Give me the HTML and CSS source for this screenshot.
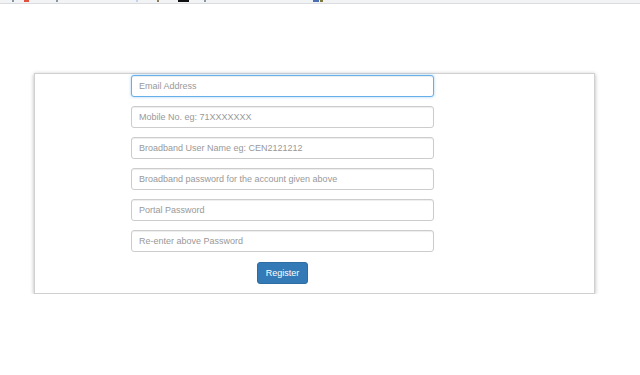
FILE: index.html
```html
<!DOCTYPE html>
<html>
<head>
<meta charset="utf-8">
<link rel="stylesheet" href="styles.css">
</head>
<body>
<div class="topstrip">
  <span class="speck s1"></span><span class="speck s2"></span><span class="speck s3"></span>
  <span class="speck s4"></span><span class="speck s5"></span><span class="speck s6"></span>
  <span class="speck s7"></span><span class="speck s8"></span><span class="speck s9"></span>
</div>
<div class="topline"></div>
<main class="card">
  <form class="form">
    <input class="field focused" type="text" placeholder="Email Address">
    <input class="field" type="text" placeholder="Mobile No. eg: 71XXXXXXX">
    <input class="field" type="text" placeholder="Broadband User Name eg: CEN2121212">
    <input class="field" type="text" placeholder="Broadband password for the account given above">
    <input class="field" type="text" placeholder="Portal Password">
    <input class="field" type="text" placeholder="Re-enter above Password">
    <div class="actions"><button class="btn" type="button">Register</button></div>
  </form>
</main>
</body>
</html>
```
FILE: styles.css
```css
html, body { margin: 0; padding: 0; background: #fff; }
body { font-family: "Liberation Sans", Arial, sans-serif; }
.topstrip { height: 3px; background: #f1f3f4; position: relative; }
.topline { height: 1px; background: #dadce0; }
.speck { position: absolute; top: 0; height: 2px; width: 2px; background: #8a94a6; }
.s1 { left: 12px; }
.s2 { left: 24px; width: 5px; background: #e0523c; }
.s3 { left: 56px; }
.s4 { left: 136px; background: #c5d3ee; }
.s5 { left: 157px; background: #8a7a5a; }
.s6 { left: 178px; width: 11px; height: 2px; background: #111; }
.s7 { left: 204px; }
.s8 { left: 313px; width: 6px; background: #4a6fb0; }
.s9 { left: 320px; width: 3px; background: #7d7a3a; }
.card {
  margin: 69px 0 0 34px;
  width: 561px;
  border: 1px solid #d0d0d0;
  box-shadow: 0 1px 4px rgba(0,0,0,0.3);
  background: #fff;
  padding: 1px 0 9px 96px;
  box-sizing: border-box;
}
.form { width: 303px; display: flex; flex-direction: column; gap: 9px; }
.field {
  display: block;
  height: 22px;
  box-sizing: border-box;
  width: 100%;
  border: 1px solid #ccc;
  border-radius: 3px;
  padding: 0 7px;
  font: 9px "Liberation Sans", Arial, sans-serif;
  color: #555;
  box-shadow: inset 0 1px 1px rgba(0,0,0,0.075);
  outline: none;
}
.field::placeholder { color: #999; }
.focused {
  border-color: #66afe9;
  box-shadow: inset 0 1px 1px rgba(0,0,0,0.075), 0 0 3px rgba(102,175,233,0.6);
}
.actions { display: flex; justify-content: center; margin-top: 1px; }
.btn {
  height: 22px;
  width: 51px;
  padding: 0;
  border: 1px solid #2e6da4;
  border-radius: 3px;
  background: #337ab7;
  color: #fff;
  font: 9px "Liberation Sans", Arial, sans-serif;
}
```
